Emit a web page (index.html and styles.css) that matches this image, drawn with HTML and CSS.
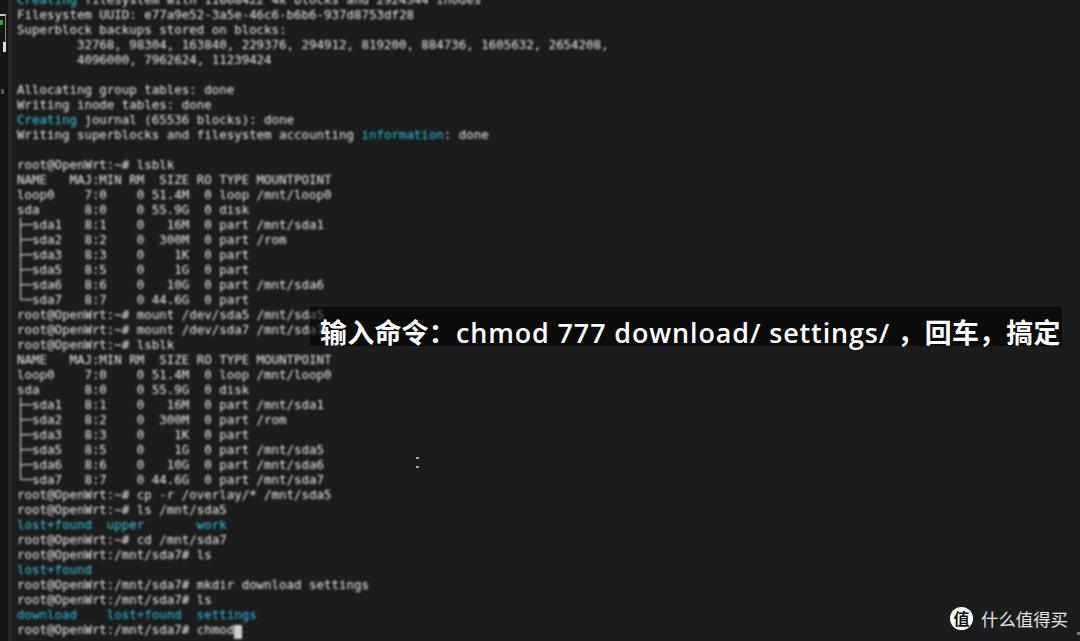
FILE: index.html
```html
<!DOCTYPE html>
<html lang="zh">
<head>
<meta charset="utf-8">
<title>Terminal</title>
<link rel="stylesheet" href="styles.css">
</head>
<body>
<main class="screen">
<div class="gutter">
<span class="gutter-frame"></span>
<span class="gutter-green"></span>
<span class="gutter-white"></span>
<span class="gutter-dot"></span>
</div>
<pre class="terminal"><span class="cyan">Creating</span> filesystem with 11668422 4k blocks and 2924544 inodes
Filesystem UUID: e77a9e52-3a5e-46c6-b6b6-937d8753df28
Superblock backups stored on blocks:
        32768, 98304, 163840, 229376, 294912, 819200, 884736, 1605632, 2654208,
        4096000, 7962624, 11239424

Allocating group tables: done
Writing inode tables: done
<span class="cyan">Creating</span> journal (65536 blocks): done
Writing superblocks and filesystem accounting <span class="blue">information</span>: done

root@OpenWrt:~# lsblk
NAME   MAJ:MIN RM  SIZE RO TYPE MOUNTPOINT
loop0    7:0    0 51.4M  0 loop /mnt/loop0
sda      8:0    0 55.9G  0 disk
├─sda1   8:1    0   16M  0 part /mnt/sda1
├─sda2   8:2    0  300M  0 part /rom
├─sda3   8:3    0    1K  0 part
├─sda5   8:5    0    1G  0 part
├─sda6   8:6    0   10G  0 part /mnt/sda6
└─sda7   8:7    0 44.6G  0 part
root@OpenWrt:~# mount /dev/sda5 /mnt/sda5
root@OpenWrt:~# mount /dev/sda7 /mnt/sda7
root@OpenWrt:~# lsblk
NAME   MAJ:MIN RM  SIZE RO TYPE MOUNTPOINT
loop0    7:0    0 51.4M  0 loop /mnt/loop0
sda      8:0    0 55.9G  0 disk
├─sda1   8:1    0   16M  0 part /mnt/sda1
├─sda2   8:2    0  300M  0 part /rom
├─sda3   8:3    0    1K  0 part
├─sda5   8:5    0    1G  0 part /mnt/sda5
├─sda6   8:6    0   10G  0 part /mnt/sda6
└─sda7   8:7    0 44.6G  0 part /mnt/sda7
root@OpenWrt:~# cp -r /overlay/* /mnt/sda5
root@OpenWrt:~# ls /mnt/sda5
<span class="cyan">lost+found  upper       work</span>
root@OpenWrt:~# cd /mnt/sda7
root@OpenWrt:/mnt/sda7# ls
<span class="cyan">lost+found</span>
root@OpenWrt:/mnt/sda7# mkdir download settings
root@OpenWrt:/mnt/sda7# ls
<span class="blue">download    lost+found  settings</span>
root@OpenWrt:/mnt/sda7# chmod<span class="cursor"> </span></pre>
</main>
<div class="caption">输入命令：<span class="caption-latin">chmod 777 download/ settings/</span> ，回车，搞定</div>
<div class="ibeam"></div>
<div class="brand">
<span class="brand-mark">值</span>
<span class="brand-name">什么值得买</span>
</div>
<span class="corner-dot"></span>
</body>
</html>
```
FILE: styles.css
```css
* { box-sizing: border-box; }
html, body { margin: 0; height: 100%; }
body {
  width: 1080px;
  height: 641px;
  overflow: hidden;
  position: relative;
  background: #1c1c1c;
}
.screen {
  display: flex;
  height: 641px;
  overflow: hidden;
}
.gutter {
  width: 12px;
  height: 641px;
  flex: none;
  position: relative;
  background: #141414;
  border-right: 4px solid #262626;
}
.gutter-frame, .gutter-green, .gutter-white, .gutter-dot { position: absolute; display: block; left: 0; }
.gutter-frame { top: 14px; width: 6px; height: 38px; border-top: 2px solid #c8c8c8; border-right: 1px solid #8a8a8a; }
.gutter-green { top: 20px; width: 3px; height: 5px; background: #3f9a3f; }
.gutter-white { top: 42px; left: 3px; width: 3px; height: 10px; background: #ddd; }
.gutter-dot { top: 89px; left: 1px; width: 3px; height: 5px; background: #555; }
.terminal {
  margin: -8px 0 0 5px;
  font-family: "DejaVu Sans Mono", monospace;
  font-size: 12.45px;
  line-height: 15px;
  color: #ececec;
  filter: blur(0.8px);
}
.cyan { color: #36cbe2; }
.blue { color: #28c2ea; }
.cursor { display: inline-block; width: 8px; height: 14px; background: #d0d0d0; vertical-align: -3px; }
.caption {
  position: absolute;
  left: 310px;
  top: 307px;
  width: 752px;
  height: 39px;
  background: rgba(0, 0, 0, 0.55);
  color: #fff;
  font-family: "Open Sans", "Noto Sans CJK SC", sans-serif;
  font-size: 26.9px;
  letter-spacing: 0.3px;
  line-height: 39px;
  font-weight: 600;
  padding: 6px 0 0 10px;
  white-space: nowrap;
}
.caption-latin { letter-spacing: 0.9px; }
.ibeam {
  position: absolute;
  left: 416px;
  top: 457px;
  width: 3px;
  height: 11px;
  border-top: 2px solid #aaa;
  border-bottom: 2px solid #aaa;
}
.brand {
  position: absolute;
  left: 950px;
  top: 607px;
  display: flex;
  align-items: center;
  gap: 8px;
  white-space: nowrap;
}
.brand-mark {
  width: 23px;
  height: 23px;
  border-radius: 50%;
  background: #fff;
  color: #111;
  font: 700 16px/23px "Noto Sans CJK SC", sans-serif;
  text-align: center;
}
.brand-name {
  color: #e6e6e6;
  font: 400 17.4px/23px "Noto Sans CJK SC", sans-serif;
}
.corner-dot {
  position: absolute;
  left: 1077px;
  top: 632px;
  width: 3px;
  height: 3px;
  background: #777;
}
```
